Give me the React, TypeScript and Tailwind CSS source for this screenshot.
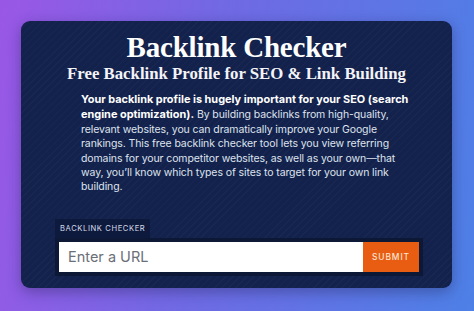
export default function App() {
  return (
    <div className="w-[474px] h-[311px] overflow-hidden bg-[linear-gradient(100deg,#9a57e6_0%,#6f6ae4_45%,#4d80e6_100%)] pt-[21px] pl-[21px] pr-[22px]">
      <div className="relative h-[267px] rounded-[9px] bg-[#13224c] shadow-[0_4px_14px_rgba(20,20,60,0.35)] overflow-hidden">
        <div className="absolute inset-0 bg-[repeating-linear-gradient(135deg,rgba(255,255,255,0.025)_0px,rgba(255,255,255,0.025)_1px,transparent_1px,transparent_5px)]" />
        <div className="relative flex flex-col">
          <h1 className="mt-[10px] text-center text-[29px] leading-[32px] font-bold text-white tracking-[-0.2px] [font-family:'Liberation_Serif',serif]">
            Backlink Checker
          </h1>
          <h2 className="mt-[1px] text-center text-[16.8px] leading-[20px] font-bold text-[#f4f4f8] [font-family:'Liberation_Serif',serif]">
            Free Backlink Profile for SEO &amp; Link Building
          </h2>
          <p className="mt-[8px] ml-[60px] w-[340px] whitespace-nowrap text-[10.5px] leading-[14.4px] text-[#dfe3ee] tracking-[-0.1px] [font-family:Inter,sans-serif]">
            <span className="text-[10.9px] leading-[14.4px] font-bold text-white tracking-[0px]">
              Your backlink profile is hugely important for your SEO (search
              <br />
              engine optimization).
            </span>{" "}
            By building backlinks from high-quality,
            <br />
            relevant websites, you can dramatically improve your Google
            <br />
            rankings. This free backlink checker tool lets you view referring
            <br />
            domains for your competitor websites, as well as your own—that
            <br />
            way, you’ll know which types of sites to target for your own link
            <br />
            building.
          </p>
          <div className="mt-[24px] ml-[34px] w-[368px] flex flex-col items-start">
            <div className="bg-[#0e1a3d] px-[5px] h-[19px] flex items-center text-[7.6px] tracking-[0.6px] text-[#d6dbe8] [font-family:Inter,sans-serif]">
              BACKLINK CHECKER
            </div>
            <div className="w-full bg-[#0d1837] p-[4px] flex">
              <div className="flex-1 h-[30px] bg-white flex items-center pl-[9px] text-[14.5px] text-[#6b6f78] [font-family:Inter,sans-serif]">
                Enter a URL
              </div>
              <button className="w-[56px] h-[30px] bg-[#e85d12] text-[8.4px] tracking-[0.9px] text-[#fde3cf] font-medium [font-family:Inter,sans-serif]">
                SUBMIT
              </button>
            </div>
          </div>
        </div>
      </div>
    </div>
  );
}
